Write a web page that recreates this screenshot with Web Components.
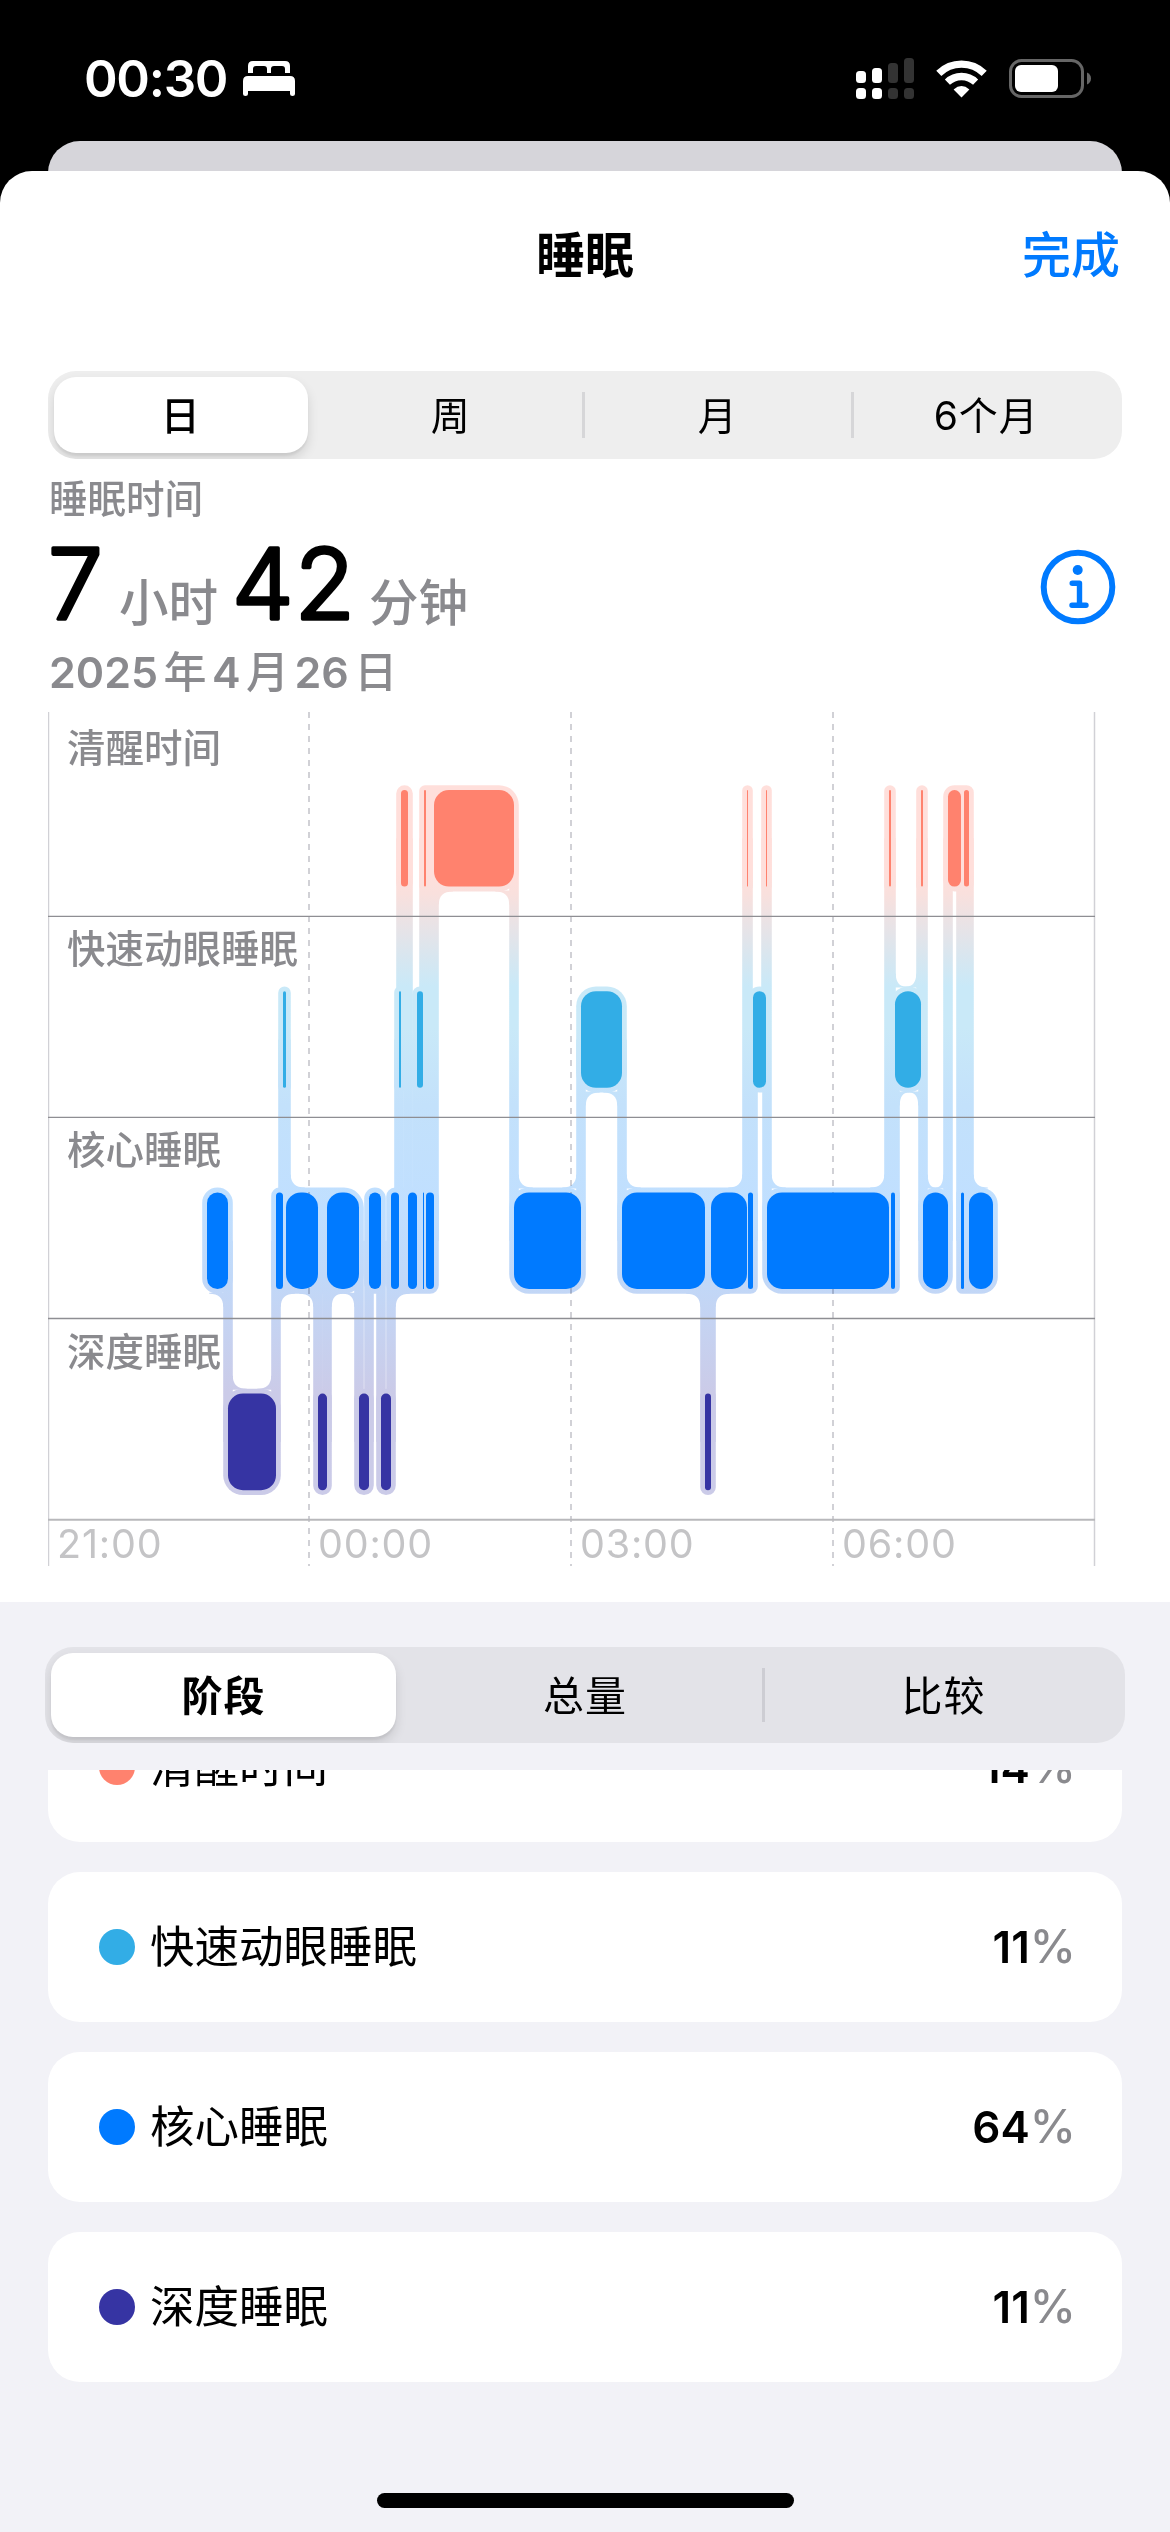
<!DOCTYPE html>
<html lang="zh-CN">
<head>
<meta charset="utf-8">
<title>睡眠</title>
<style>
  html, body { margin: 0; background: #000; }
  body {
    width: 1170px;
    height: 2532px;
    overflow: hidden;
    font-family: Inter, "Noto Sans CJK SC", sans-serif;
    color: #000;
  }
</style>
</head>
<body>
<sleep-app></sleep-app>

<script>
class StatusBar extends HTMLElement {
  constructor() {
    super()
    this.attachShadow({ mode: 'open' }).innerHTML = `
      <style>
        :host {
          display: flex;
          align-items: center;
          box-sizing: border-box;
          height: 141px;
          padding: 16px 78px 0 84px;
          background: #000;
          color: #fff;
        }
        .time {
          font-size: 51px;
          font-weight: 600;
          line-height: 60px;
          width: 159px;
          letter-spacing: -1.3px;
        }
        .spacer { flex: 1; }
        svg { display: block; flex: none; }
        .signal { margin-right: 22px; }
        .wifi { margin-right: 22px; }
      </style>
      <span class="time"><slot></slot></span>
      <svg width="52" height="36" viewBox="0 0 52 36" fill="#fff">
        <path d="M5 12V5q0-5 5-5h32q5 0 5 5v7h-5V8q0-3-3-3h-8q-3 0-3 3v4h-4V8q0-3-3-3h-8q-3 0-3 3v4z"/>
        <path d="M0 20q0-5 5-5h42q5 0 5 5v13q0 2-2.500 2t-2.500-2v-3H5v3q0 2-2.500 2T0 33z"/>
      </svg>
      <span class="spacer"></span>
      <svg class="signal" width="58" height="42" viewBox="0 0 58 42">
        <g fill="#fff">
          <rect x="0" y="13" width="10" height="12" rx="3.500"/>
          <rect x="16" y="10" width="10" height="15" rx="3.500"/>
          <rect x="0" y="30" width="10" height="11" rx="3.500"/>
          <rect x="16" y="30" width="10" height="11" rx="3.500"/>
        </g>
        <g fill="#333">
          <rect x="32" y="5" width="10" height="20" rx="3.500"/>
          <rect x="48" y="0" width="10" height="25" rx="3.500"/>
          <rect x="32" y="30" width="10" height="11" rx="3.500"/>
          <rect x="48" y="30" width="10" height="11" rx="3.500"/>
        </g>
      </svg>
      <svg class="wifi" width="51" height="38" viewBox="0 0 51 38">
        <g fill="none" stroke="#fff" stroke-width="7.300">
          <path d="M2.800 13.400a32.500 32.500 0 0 1 45.400 0"/>
          <path d="M11.400 22.200a20.300 20.300 0 0 1 28.200 0"/>
        </g>
        <path fill="#fff" d="M25.500 37.500 17.600 29.400q7.900-6.800 15.800 0z"/>
      </svg>
      <svg width="83" height="40" viewBox="0 0 83 40">
        <rect x="1.500" y="1.500" width="72" height="36" rx="11" fill="none" stroke="#666" stroke-width="3"/>
        <rect x="6" y="6" width="43" height="27" rx="6" fill="#fff"/>
        <path fill="#666" d="M78 13.500q4 1.800 4 6t-4 6z"/>
      </svg>`
  }
}

class NavBar extends HTMLElement {
  constructor() {
    super()
    this.attachShadow({ mode: 'open' }).innerHTML = `
      <style>
        :host {
          display: grid;
          grid-template-columns: 1fr auto 1fr;
          align-items: center;
          height: 168px;
          padding: 1px 50px 0;
          margin-bottom: -1px;
          font-size: 49px;
          line-height: 60px;
        }
        .title { grid-column: 2; font-weight: 700; }
        .action { justify-self: end; color: #007aff; font-weight: 500; }
      </style>
      <span class="title"><slot></slot></span>
      <span class="action"><slot name="action"></slot></span>`
  }
}

class SegmentedControl extends HTMLElement {
  constructor() {
    super()
    this.attachShadow({ mode: 'open' }).innerHTML = `
      <style>
        :host {
          display: grid;
          grid-auto-flow: column;
          grid-auto-columns: 1fr;
          box-sizing: border-box;
          height: var(--height, 88px);
          padding: 6px 0;
          border-radius: 28px;
          overflow: hidden;
          background: var(--track, #eee);
          font-size: var(--size, 39px);
        }
        ::slotted(*) {
          display: flex;
          align-items: center;
          justify-content: center;
          position: relative;
          padding-bottom: 4px;
          border-radius: 22px;
          letter-spacing: 1px;
        }
        ::slotted([selected]) {
          background: #fff;
          font-weight: var(--selected-weight, 500);
          box-shadow: 0 6px 12px rgba(0, 0, 0, .12), 0 3px 2px rgba(0, 0, 0, .05);
          margin: 0 9px 0 6px;
        }
        ::slotted([divided]) {
          margin-left: -3px;
          border-radius: 0;
          background: linear-gradient(var(--line, #d6d6d8), var(--line, #d6d6d8)) left center / 3px var(--line-height, 46px) no-repeat;
        }
      </style>
      <slot></slot>`
  }
}

class SleepSummary extends HTMLElement {
  constructor() {
    super()
    this.attachShadow({ mode: 'open' }).innerHTML = `
      <style>
        :host {
          display: flex;
          align-items: flex-start;
          justify-content: space-between;
          height: 253px;
          padding: 0 54px 0 49px;
          color: #8a8a8e;
        }
        .caption { font-size: 38.500px; font-weight: 500; line-height: 46px; margin-top: 17px; }
        .total {
          display: flex;
          align-items: baseline;
          height: 84px;
          margin-top: 15px;
          line-height: 60px;
          font-size: 49.500px;
          font-weight: 500;
        }
        .digits { display: block; flex: none; height: 84px; overflow: visible; }
        /* a light weight under a round stroke gives the digits soft ends */
        .digits text {
          font-size: 98px;
          font-weight: 300;
          letter-spacing: 1px;
          fill: #000;
          stroke: #000;
          stroke-width: 3.600px;
          stroke-linejoin: round;
        }
        .unit { margin: 0 14px 0 16px; }
        .date {
          font-size: 43px;
          font-weight: 500;
          line-height: 52px;
          margin-top: 25px;
          word-spacing: -6px;
        }
        .info { display: block; margin-top: 90px; }
      </style>
      <div>
        <div class="caption"><slot name="caption"></slot></div>
        <div class="total">
          <svg class="digits" width="54"><text x="-1" y="82">${this.getAttribute('hours')}</text></svg>
          <span class="unit">小时</span>
          <svg class="digits" width="121"><text x="0" y="82">${this.getAttribute('minutes')}</text></svg>
          <span class="unit">分钟</span>
        </div>
        <div class="date"><slot name="date"></slot></div>
      </div>
      <svg class="info" width="76" height="76" viewBox="0 0 76 76">
        <circle cx="38" cy="38" r="34.300" fill="none" stroke="#007aff" stroke-width="6"/>
        <circle cx="37.700" cy="21" r="5" fill="#007aff"/>
        <path d="M32.200 34.200h7.300v21.600M32 56.300h14" fill="none" stroke="#007aff"
          stroke-width="5.400" stroke-linecap="round" stroke-linejoin="round"/>
      </svg>`
  }
}

// x offset of every stage change; each entry is [stage, start]
const NIGHT = [
  ['core', 207], ['deep', 228], ['core', 276], ['rem', 283], ['core', 286],
  ['deep', 318], ['core', 327], ['deep', 359], ['core', 369], ['deep', 381],
  ['core', 391], ['rem', 399], ['awake', 401], ['core', 408], ['rem', 417],
  ['core', 423], ['awake', 424], ['core', 426], ['awake', 434], ['core', 514],
  ['rem', 581], ['core', 622], ['deep', 705], ['core', 711], ['awake', 747],
  ['core', 748], ['rem', 753], ['awake', 766], ['core', 767], ['awake', 889],
  ['core', 891], ['rem', 895], ['awake', 921], ['core', 923], ['awake', 948],
  ['core', 961], ['awake', 964], ['core', 969], ['end', 993],
]

const STAGES = {
  awake: { top: 78, color: '#ff826e' },
  rem: { top: 279.2, color: '#32ade6' },
  core: { top: 480.4, color: '#007aff' },
  deep: { top: 681.6, color: '#3634a3' },
}

const ORIGIN = 48
const BAR = 96.6
const PAD = 4.8
const RADIUS = 15

class SleepChart extends HTMLElement {
  constructor() {
    super()
    this.attachShadow({ mode: 'open' }).innerHTML = `
      <style>
        :host {
          display: grid;
          grid-template-rows: 204px 201.300px 201.300px 201px 46px;
          position: relative;
          width: 1047px;
          margin-left: 48px;
        }
        svg { position: absolute; left: 0; top: 0; }
        .halo { mix-blend-mode: multiply; }
        .label {
          padding: 10px 0 0 19px;
          font-size: 38.500px;
          line-height: 46px;
          font-weight: 500;
          color: #8a8a8e;
          position: relative;
        }
        .label:first-of-type { padding-top: 13px; }
        .axis {
          display: grid;
          grid-template-columns: 261px 262px 262px 262px;
          font-size: 39.500px;
          line-height: 48px;
          letter-spacing: 0.8px;
          color: #c4c4c6;
          position: relative;
        }
        .axis span { padding-left: 9px; }
      </style>
      <svg width="1048" height="854" viewBox="0 0 1048 854"></svg>
      <div class="label">清醒时间</div>
      <div class="label">快速动眼睡眠</div>
      <div class="label">核心睡眠</div>
      <div class="label">深度睡眠</div>
      <div class="axis"><span>21:00</span><span>00:00</span><span>03:00</span><span>06:00</span></div>`
    this.shadowRoot.querySelector('svg').innerHTML = this.draw()
  }

  draw() {
    const bars = NIGHT.slice(0, -1).map(([stage, x], i) => ({
      stage,
      x0: x - ORIGIN,
      x1: NIGHT[i + 1][1] - ORIGIN,
      y: STAGES[stage].top,
    }))
    const links = bars.slice(1).map((b, i) => ({
      x0: b.x0 - PAD,
      x1: b.x0 + PAD,
      top: Math.min(b.y, bars[i].y) + BAR / 2,
      bottom: Math.max(b.y, bars[i].y) + BAR / 2,
    }))

    const halo = links.map(
      (l) => `<rect x="${l.x0}" y="${l.top}" width="${l.x1 - l.x0}" height="${l.bottom - l.top}"/>`
    )

    for (const stage of Object.keys(STAGES)) {
      for (const run of this.runs(bars.filter((b) => b.stage === stage))) {
        const top = run.y - PAD
        const bottom = run.y + BAR + PAD
        halo.push(this.capsule(run.x0, run.x1, top, bottom, run.r0, run.r1))
        this.fillets(halo, run, links, top, -1)
        this.fillets(halo, run, links, bottom, 1)
      }
    }

    const solid = bars.map((b) => {
      const w = b.x1 - b.x0
      const r = Math.min(w / 2, RADIUS)
      return `<rect x="${b.x0}" y="${b.y}" width="${w}" height="${BAR}" rx="${r}" fill="${STAGES[b.stage].color}"/>`
    })

    return `
      <defs>
        <linearGradient id="halo" gradientUnits="userSpaceOnUse" x1="0" y1="78" x2="0" y2="778">
          <stop offset="0.120" stop-color="#ffdfdb"/>
          <stop offset="0.148" stop-color="#f9e0dd"/>
          <stop offset="0.280" stop-color="#c9e9f8"/>
          <stop offset="0.340" stop-color="#c9e9f8"/>
          <stop offset="0.450" stop-color="#c3e1fb"/>
          <stop offset="0.600" stop-color="#c0dfff"/>
          <stop offset="0.700" stop-color="#c1d8f8"/>
          <stop offset="0.860" stop-color="#cbcbe8"/>
          <stop offset="1" stop-color="#cbcbe8"/>
        </linearGradient>
      </defs>
      <path d="M261 0V854M523 0V854M785 0V854" stroke="#d1d1d6" stroke-width="2" stroke-dasharray="6 6"/>
      <path d="M0.500 0V854M1046.500 0V854" stroke="#d1d1d6" stroke-width="1.500"/>
      <g class="halo" fill="url(#halo)">${halo.join('')}</g>
      <path d="M0 204.300H1047M0 405.300H1047M0 606.500H1047" stroke="#8e8e93" stroke-width="1.300"/>
      <path d="M0 807.700H1047" stroke="#b8b8bb" stroke-width="2"/>
      ${solid.join('')}`
  }

  // bars of one stage whose outlines touch share a single outline
  runs(bars) {
    const out = []
    for (const b of bars) {
      const r = Math.min((b.x1 - b.x0) / 2, RADIUS) + PAD
      const last = out[out.length - 1]
      if (last && b.x0 - PAD <= last.x1) {
        last.x1 = b.x1 + PAD
        last.r1 = r
      } else {
        out.push({ x0: b.x0 - PAD, x1: b.x1 + PAD, y: b.y, r0: r, r1: r })
      }
    }
    return out
  }

  capsule(x0, x1, y0, y1, a, b) {
    return `<path d="M${x0 + a} ${y0}H${x1 - b}A${b} ${b} 0 0 1 ${x1} ${y0 + b}V${y1 - b}A${b} ${b} 0 0 1 ${x1 - b} ${y1}H${x0 + a}A${a} ${a} 0 0 1 ${x0} ${y1 - a}V${y0 + a}A${a} ${a} 0 0 1 ${x0 + a} ${y0}z"/>`
  }

  // rounds the inner corners where a vertical link leaves the outline
  fillets(out, run, links, y, dir) {
    const crossing = links
      .filter((l) => l.top < y + dir * 3 && l.bottom > y + dir * 3 && l.x1 > run.x0 && l.x0 < run.x1)
      .sort((a, b) => a.x0 - b.x0)
    let x = run.x0
    let linked = false
    const close = (end, endLinked) => {
      const gap = end - x
      if (gap > 12) {
        const rx = Math.min(14, linked && endLinked ? gap / 2 : gap)
        const h = 13 * dir
        if (linked) out.push(`<path d="M${x - 1} ${y - dir}H${x + rx}V${y}Q${x} ${y} ${x} ${y + h}H${x - 1}z"/>`)
        if (endLinked) out.push(`<path d="M${end + 1} ${y - dir}H${end - rx}V${y}Q${end} ${y} ${end} ${y + h}H${end + 1}z"/>`)
      }
    }
    for (const l of crossing) {
      close(l.x0, true)
      x = Math.max(x, l.x1)
      linked = true
    }
    close(run.x1, false)
  }
}

class StageRow extends HTMLElement {
  constructor() {
    super()
    this.attachShadow({ mode: 'open' }).innerHTML = `
      <style>
        :host {
          display: flex;
          align-items: center;
          flex: none;
          box-sizing: border-box;
          height: 150px;
          padding: 0 46px 0 51px;
          border-radius: 32px;
          background: #fff;
          font-size: 44.500px;
          line-height: 54px;
        }
        .dot {
          width: 36px;
          height: 36px;
          margin-right: 15px;
          border-radius: 50%;
          background: var(--color);
        }
        .name { flex: 1; }
        .value { font-weight: 600; font-size: 44px; }
        .percent { font-weight: 500; color: #8a8a8e; font-size: 46.500px; line-height: 0; }
      </style>
      <span class="dot"></span>
      <span class="name"><slot></slot></span>
      <span class="value"><slot name="value"></slot><span class="percent">%</span></span>`
  }
}

class SleepApp extends HTMLElement {
  constructor() {
    super()
    this.attachShadow({ mode: 'open' }).innerHTML = `
      <style>
        :host { display: flex; flex-direction: column; height: 2532px; }
        .behind {
          flex: none;
          height: 70px;
          margin: 0 48px -40px;
          border-radius: 32px 32px 0 0;
          background: #d6d5da;
        }
        .sheet {
          display: flex;
          flex-direction: column;
          flex: 1;
          position: relative;
          border-radius: 32px 32px 0 0;
          overflow: hidden;
          background: #fff;
        }
        .range { margin: 32px 48px 0; }
        [slot="date"] b { font-weight: 600; }
        .details {
          display: flex;
          flex-direction: column;
          flex: 1;
          margin-top: 36px;
          background: #f2f2f7;
        }
        .mode {
          --height: 96px;
          --size: 41px;
          --track: #e3e3e8;
          --line: #cdcdd3;
          --line-height: 54px;
          --selected-weight: 700;
          margin: 45px 45px 27px;
        }
        .list {
          display: flex;
          flex-direction: column;
          justify-content: flex-end;
          gap: 30px;
          height: 612px;
          margin: 0 48px;
          overflow: hidden;
        }
        .home {
          width: 417px;
          height: 15px;
          margin: auto auto 24px;
          border-radius: 8px;
          background: #000;
        }
      </style>
      <status-bar>00:30</status-bar>
      <div class="behind"></div>
      <div class="sheet">
        <nav-bar>睡眠<span slot="action">完成</span></nav-bar>
        <segmented-control class="range">
          <span selected>日</span><span>周</span><span divided>月</span><span divided>6个月</span>
        </segmented-control>
        <sleep-summary hours="7" minutes="42">
          <span slot="caption">睡眠时间</span>
          <span slot="date"><b>2025</b> 年 <b>4</b> 月 <b>26</b> 日</span>
        </sleep-summary>
        <sleep-chart></sleep-chart>
        <div class="details">
          <segmented-control class="mode">
            <span selected>阶段</span><span>总量</span><span divided>比较</span>
          </segmented-control>
          <div class="list">
            <stage-row style="--color: #ff826e">清醒时间<span slot="value">14</span></stage-row>
            <stage-row style="--color: #32ade6">快速动眼睡眠<span slot="value">11</span></stage-row>
            <stage-row style="--color: #007aff">核心睡眠<span slot="value">64</span></stage-row>
            <stage-row style="--color: #3634a3">深度睡眠<span slot="value">11</span></stage-row>
          </div>
          <div class="home"></div>
        </div>
      </div>`
  }
}

customElements.define('status-bar', StatusBar)
customElements.define('nav-bar', NavBar)
customElements.define('segmented-control', SegmentedControl)
customElements.define('sleep-summary', SleepSummary)
customElements.define('sleep-chart', SleepChart)
customElements.define('stage-row', StageRow)
customElements.define('sleep-app', SleepApp)
</script>
</body>
</html>
